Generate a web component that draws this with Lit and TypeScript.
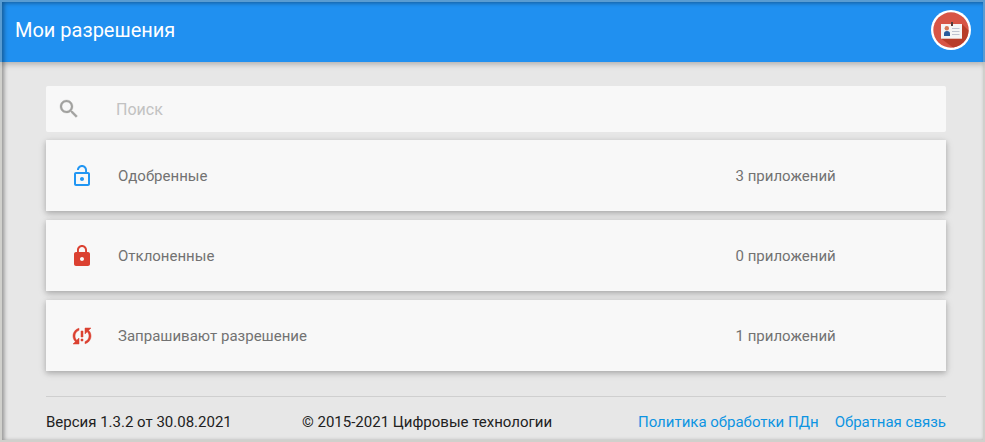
import { LitElement, html, css, svg } from "lit";
import { customElement, property } from "lit/decorators.js";

const icons: Record<string, { color: string; path: string }> = {
  open: {
    color: "#2196f3",
    path: "M12 17c1.1 0 2-.9 2-2s-.9-2-2-2-2 .9-2 2 .9 2 2 2zm6-9h-1V6c0-2.760-2.240-5-5-5S7 3.240 7 6h1.900c0-1.710 1.390-3.100 3.100-3.100 1.710 0 3.100 1.390 3.100 3.100v2H6c-1.100 0-2 .9-2 2v10c0 1.100.9 2 2 2h12c1.100 0 2-.9 2-2V10c0-1.100-.9-2-2-2zm0 12H6V10h12v10z",
  },
  locked: {
    color: "#db4131",
    path: "M18 8h-1V6c0-2.760-2.240-5-5-5S7 3.240 7 6v2H6c-1.100 0-2 .9-2 2v10c0 1.100.9 2 2 2h12c1.100 0 2-.9 2-2V10c0-1.100-.9-2-2-2zm-6 9c-1.100 0-2-.9-2-2s.9-2 2-2 2 .9 2 2-.9 2-2 2zm3.100-9H8.900V6c0-1.710 1.390-3.100 3.100-3.100 1.710 0 3.100 1.390 3.100 3.100v2z",
  },
  pending: {
    color: "#db4131",
    path: "M3 12c0 2.210.91 4.200 2.360 5.640L3 20h6v-6l-2.240 2.240C5.680 15.150 5 13.660 5 12c0-2.610 1.670-4.830 4-5.650V4.260C5.550 5.150 3 8.270 3 12zm8 5h2v-2h-2v2zM21 4h-6v6l2.240-2.240C18.320 8.850 19 10.340 19 12c0 2.610-1.670 4.830-4 5.650v2.090c3.450-.89 6-4.010 6-7.740 0-2.210-.91-4.200-2.360-5.640L21 4zm-10 9h2V7h-2v6z",
  },
};

@customElement("permission-row")
export class PermissionRow extends LitElement {
  @property() icon = "open";
  @property() label = "";
  @property() count = "";

  static styles = css`
    :host {
      display: flex;
      align-items: center;
      box-sizing: border-box;
      height: 71px;
      padding-left: 24px;
      background: #f8f8f8;
      box-shadow: 0 2px 5px rgba(0, 0, 0, 0.2), 0 2px 9px rgba(0, 0, 0, 0.11);
      color: #727272;
    }
    svg {
      width: 24px;
      height: 24px;
      flex: none;
    }
    .bold {
      stroke: #db4131;
      stroke-width: 0.5px;
    }
    .label {
      flex: 1;
      padding-left: 24px;
    }
    .count {
      width: 210.5px;
    }
  `;

  render() {
    const icon = icons[this.icon];
    return html`
      <svg class=${this.icon === "pending" ? "bold" : ""} viewBox="0 0 24 24" fill=${icon.color}>
        ${svg`<path d=${icon.path} />`}
      </svg>
      <span class="label">${this.label}</span>
      <span class="count">${this.count}</span>
    `;
  }
}

@customElement("app-root")
export class AppRoot extends LitElement {
  static styles = css`
    :host {
      display: flex;
      flex-direction: column;
      position: relative;
      box-sizing: border-box;
      height: 442px;
      overflow: hidden;
      background: #e7e7e7;
      font: 15px/20px Roboto, sans-serif;
    }
    header {
      display: flex;
      align-items: center;
      justify-content: space-between;
      flex: none;
      box-sizing: border-box;
      height: 62px;
      padding: 0 13px 2px 15px;
      background: #2090f0;
      color: #fff;
      box-shadow: 0 2px 6px rgba(0, 0, 0, 0.26);
    }
    h1 {
      margin: 0;
      font-size: 20px;
      font-weight: 400;
      line-height: 28px;
    }
    .avatar {
      width: 42px;
      height: 42px;
    }
    main {
      display: flex;
      flex-direction: column;
      gap: 9px;
      padding: 24px 39px 0 46px;
    }
    .search {
      display: flex;
      align-items: center;
      height: 46px;
      margin-bottom: -1px;
      padding-left: 11px;
      border-radius: 2px;
      background: #f8f8f8;
      color: #c2c2c2;
      font-size: 16px;
      gap: 35px;
    }
    .search span {
      padding-top: 2px;
    }
    .search svg {
      width: 24px;
      height: 24px;
      fill: #a2a2a0;
      stroke: #a2a2a0;
      stroke-width: 0.3px;
    }
    footer {
      display: flex;
      margin: 25px 39px 0 46px;
      padding-top: 15px;
      border-top: 1px solid #cfcfcf;
      color: #212121;
    }
    .version {
      width: 256px;
    }
    .copyright {
      flex: 1;
    }
    .links {
      display: flex;
      gap: 16px;
    }
    a {
      color: #0d94e2;
      text-decoration: none;
    }
    .frame {
      position: absolute;
      inset: 0;
      pointer-events: none;
      border: 2px solid rgba(175, 175, 165, 0.4);
      box-shadow: inset 2px 1px 4px rgba(0, 0, 0, 0.38);
    }
  `;

  render() {
    return html`
      <header>
        <h1>Мои разрешения</h1>
        <svg class="avatar" viewBox="0 0 42 42">
          <circle cx="21" cy="21" r="20" fill="#fff" />
          <circle cx="21" cy="21" r="17.700" fill="#d75546" />
          <path d="M32 15l6.500 6.500A17.700 17.700 0 0 1 23 38.500L11 29.500z" fill="#b83d29" />
          <rect x="11" y="15" width="21" height="14.700" fill="#f5f5f5" />
          <path d="M21 13h2v4h-2z" fill="#573d3b" />
          <circle cx="16.800" cy="19.300" r="2.200" fill="#d77855" />
          <path d="M14 27v-2.500q0-2.500 3-2.500t3 2.500V27z" fill="#2a5c9c" />
          <path d="M22 19.500h7.500M22 22.500h7.500M22 25.500h7.500" stroke="#bfc3d0" />
        </svg>
      </header>
      <main>
        <div class="search">
          <svg viewBox="0 0 24 24">
            <path d="M15.500 14h-.79l-.28-.27C15.410 12.590 16 11.110 16 9.500 16 5.910 13.090 3 9.500 3S3 5.910 3 9.500 5.910 16 9.500 16c1.610 0 3.090-.59 4.230-1.570l.27.28v.79l5 4.990L20.490 19l-4.990-5zm-6 0C7.010 14 5 11.990 5 9.500S7.010 5 9.500 5 14 7.010 14 9.500 11.990 14 9.500 14z" />
          </svg>
          <span>Поиск</span>
        </div>
        <permission-row icon="open" label="Одобренные" count="3 приложений"></permission-row>
        <permission-row icon="locked" label="Отклоненные" count="0 приложений"></permission-row>
        <permission-row icon="pending" label="Запрашивают разрешение" count="1 приложений"></permission-row>
      </main>
      <footer>
        <span class="version">Версия 1.3.2 от 30.08.2021</span>
        <span class="copyright">© 2015-2021 Цифровые технологии</span>
        <nav class="links">
          <a>Политика обработки ПДн</a>
          <a>Обратная связь</a>
        </nav>
      </footer>
      <div class="frame"></div>
    `;
  }
}
